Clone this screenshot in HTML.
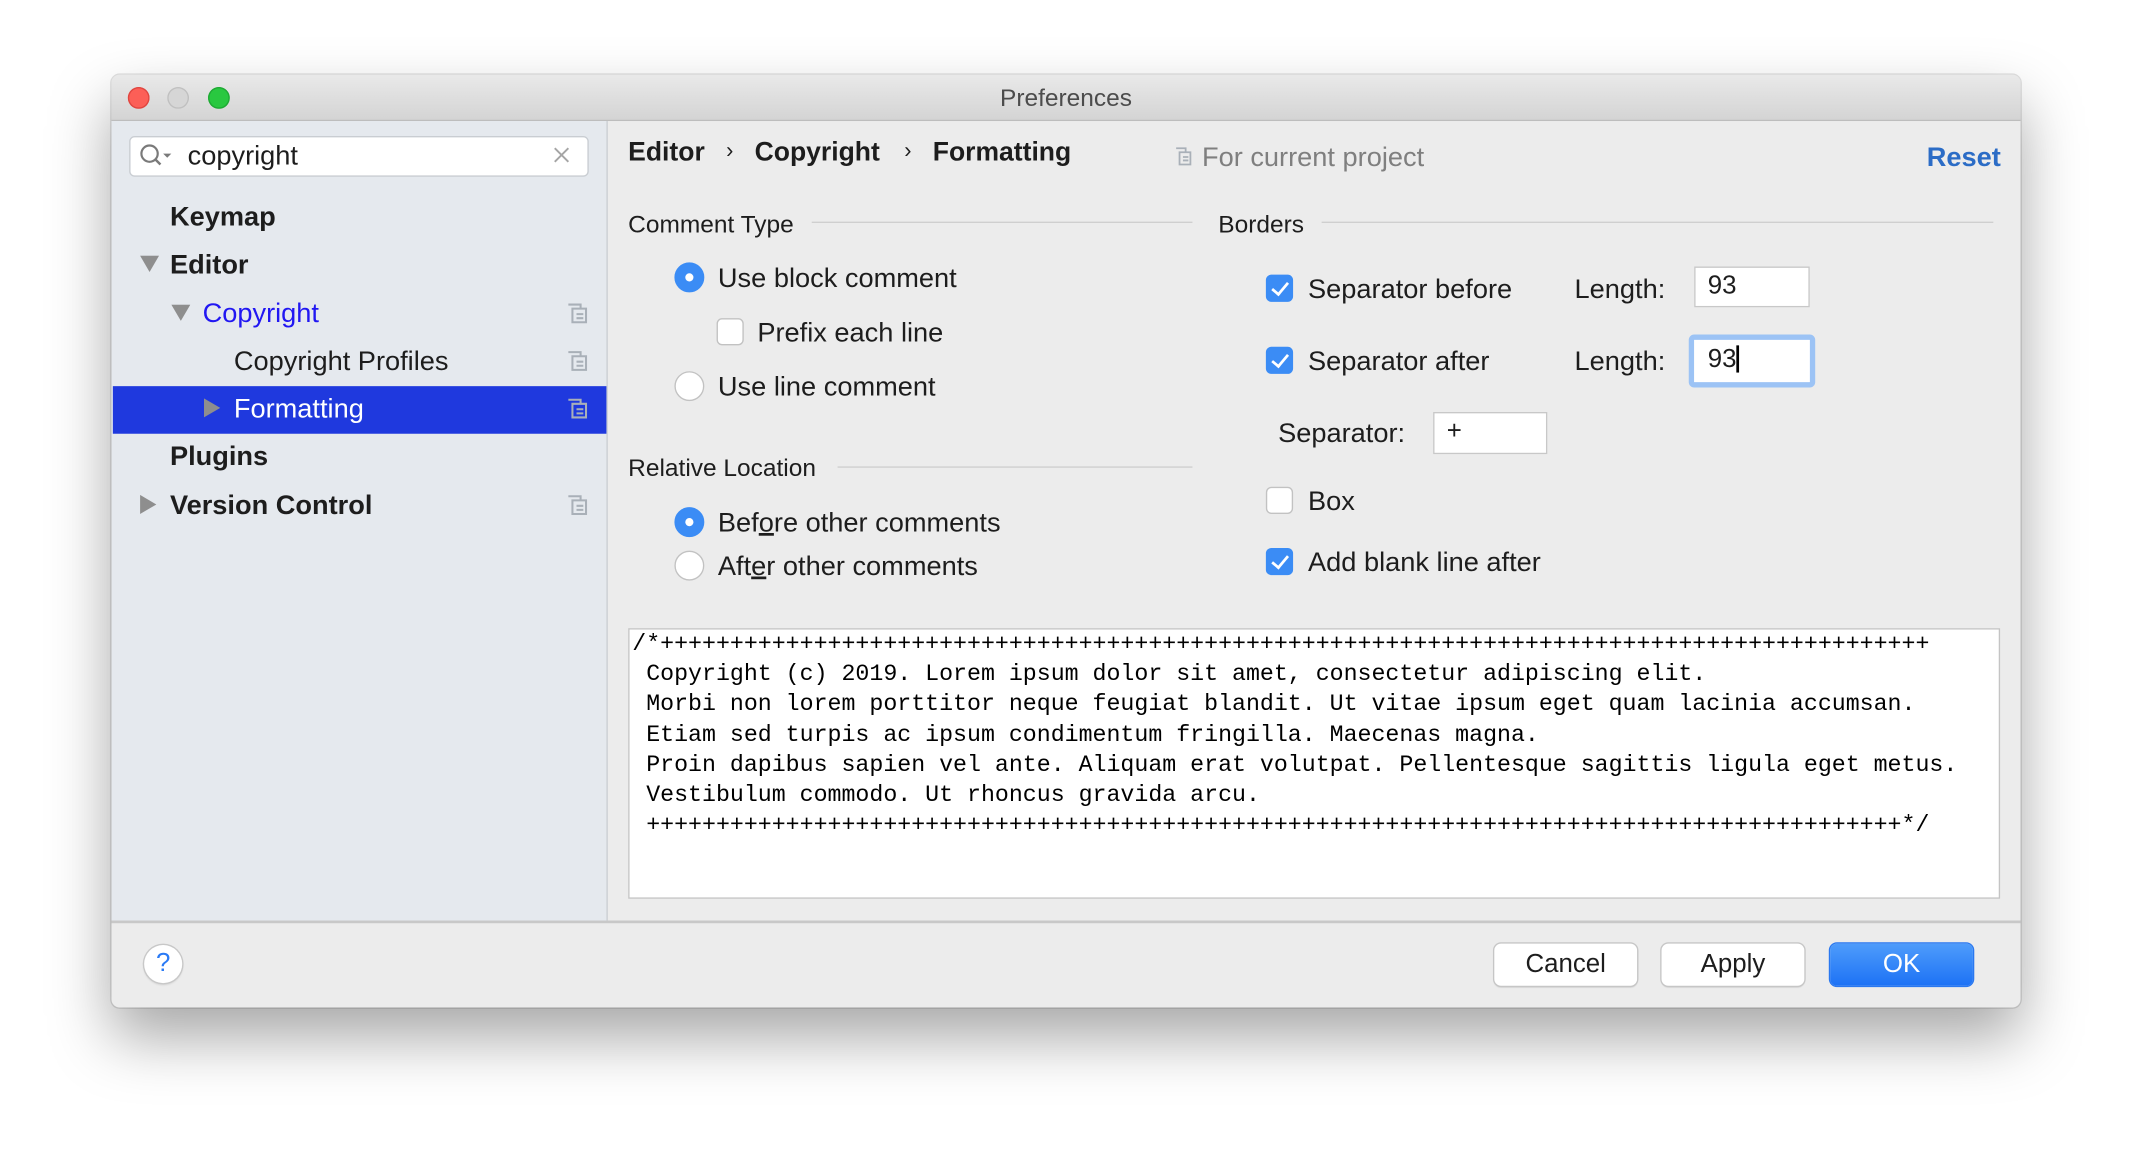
<!DOCTYPE html>
<html><head><meta charset="utf-8"><style>
html,body{margin:0;padding:0;background:#fff;width:2132px;height:1156px;overflow:hidden}
#s{position:absolute;left:0;top:0;width:1568px;height:850px;transform:scale(1.3597);transform-origin:0 0;font-family:"Liberation Sans",sans-serif;color:#1d1d1d}
.a{position:absolute;white-space:nowrap}
.win{position:absolute;left:82px;top:55px;width:1404px;height:686px;border-radius:6px;background:#ececec;box-shadow:0 22px 45px rgba(0,0,0,.35),0 0 0 1px rgba(0,0,0,.12);overflow:hidden}
.t{font-size:20px;line-height:23px}
.b{font-weight:bold}
.radio{position:absolute;width:22px;height:22px;border-radius:50%;background:#fff;border:1px solid #c2c2c2;box-sizing:border-box}
.radio.on{background:#3b8cf5;border-color:#3b8cf5}
.radio.on:after{content:"";position:absolute;left:7px;top:7px;width:6px;height:6px;border-radius:50%;background:#fff}
.cb{position:absolute;width:20px;height:20px;border-radius:4px;background:#fff;border:1px solid #c2c2c2;box-sizing:border-box}
.cb.on{background:#3b8cf5;border-color:#3b8cf5}
.cb.on:after{content:"";position:absolute;left:6px;top:2px;width:5px;height:10px;border:solid #fff;border-width:0 2px 2px 0;transform:rotate(40deg)}
.fld{position:absolute;background:#fff;border:1px solid #c8c8c8;box-sizing:border-box;font-size:19px;line-height:28px;padding-left:9px}
.btn{position:absolute;top:694px;height:31px;width:105px;border-radius:5px;background:#fff;box-shadow:0 0 0 1px #c6c6c6,0 1px 1px rgba(0,0,0,.15);text-align:center;font-size:19px;line-height:31px}
.line{position:absolute;height:1px;background:#cfcfcf}
</style></head><body><div id="s">
<div class="win">
 <div style="position:absolute;left:0;top:0;right:0;height:33px;background:linear-gradient(#e9e9e9,#d4d4d4);border-bottom:1px solid #bdbdbd"></div>
 <div style="position:absolute;left:12px;top:9px;width:16px;height:16px;border-radius:50%;background:#fc5f57;box-shadow:inset 0 0 0 1px #df4640"></div>
 <div style="position:absolute;left:41px;top:9px;width:16px;height:16px;border-radius:50%;background:#d6d6d6;box-shadow:inset 0 0 0 1px #c0c0c0"></div>
 <div style="position:absolute;left:71px;top:9px;width:16px;height:16px;border-radius:50%;background:#29c840;box-shadow:inset 0 0 0 1px #1fa934"></div>
 <div class="a" style="left:0;right:0;top:7px;text-align:center;font-size:18px;color:#4c4c4c">Preferences</div>
 <div style="position:absolute;left:0;top:34px;width:364px;height:588px;background:#e5e9ee;border-right:1px solid #cbcfd3"></div>
 <div style="position:absolute;left:0;top:622px;right:0;height:2px;background:#c8c8c8"></div>
</div>
<!-- sidebar -->
<div style="position:absolute;left:95px;top:100px;width:338px;height:30px;background:#fff;border:1px solid #c9cdd2;border-radius:4px;box-sizing:border-box"></div>
<svg class="a" style="left:102px;top:105px" width="28" height="20"><circle cx="8" cy="8" r="6" fill="none" stroke="#7a7a7a" stroke-width="1.6"/><line x1="12.5" y1="12.5" x2="16" y2="16" stroke="#7a7a7a" stroke-width="1.8"/><path d="M18 8h6l-3 3z" fill="#7a7a7a"/></svg>
<div class="a t" style="left:138px;top:104px">copyright</div>
<svg class="a" style="left:407px;top:108px" width="12" height="12"><path d="M1 1L11 11M11 1L1 11" stroke="#a5a5a5" stroke-width="1.4"/></svg>
<div style="position:absolute;left:83px;top:284px;width:363px;height:35px;background:#1f39de"></div>
<div class="a t b" style="left:125px;top:149px">Keymap</div>
<svg class="a" style="left:103px;top:188px" width="14" height="12"><path d="M0 0h14L7 12z" fill="#8e8e8e"/></svg>
<div class="a t b" style="left:125px;top:184px">Editor</div>
<svg class="a" style="left:126px;top:224px" width="14" height="12"><path d="M0 0h14L7 12z" fill="#8e8e8e"/></svg>
<div class="a t" style="left:149px;top:220px;color:#2117f2">Copyright</div>
<div class="a t" style="left:172px;top:255px">Copyright Profiles</div>
<svg class="a" style="left:150px;top:293px" width="12" height="14"><path d="M0 0v14L12 7z" fill="#8e8e8e"/></svg>
<div class="a t" style="left:172px;top:290px;color:#fff">Formatting</div>
<div class="a t b" style="left:125px;top:325px">Plugins</div>
<svg class="a" style="left:103px;top:364px" width="12" height="14"><path d="M0 0v14L12 7z" fill="#8e8e8e"/></svg>
<div class="a t b" style="left:125px;top:361px">Version Control</div>
<svg class="a" style="left:417px;top:223px" width="15" height="15"><path d="M1 1h9v3M4 4h10v10H4z M7 8h5M7 11h5" fill="none" stroke="#a9b0b8" stroke-width="1.5"/></svg>
<svg class="a" style="left:417px;top:258px" width="15" height="15"><path d="M1 1h9v3M4 4h10v10H4z M7 8h5M7 11h5" fill="none" stroke="#a9b0b8" stroke-width="1.5"/></svg>
<svg class="a" style="left:417px;top:293px" width="15" height="15"><path d="M1 1h9v3M4 4h10v10H4z M7 8h5M7 11h5" fill="none" stroke="#a9b0b8" stroke-width="1.5"/></svg>
<svg class="a" style="left:417px;top:364px" width="15" height="15"><path d="M1 1h9v3M4 4h10v10H4z M7 8h5M7 11h5" fill="none" stroke="#a9b0b8" stroke-width="1.5"/></svg>
<!-- header -->
<div class="a t b" style="left:462px;top:101px;font-size:19.5px">Editor</div>
<div class="a t" style="left:534px;top:100px;font-size:16px">›</div>
<div class="a t b" style="left:555px;top:101px;font-size:19.5px">Copyright</div>
<div class="a t" style="left:665px;top:100px;font-size:16px">›</div>
<div class="a t b" style="left:686px;top:101px;font-size:19.5px">Formatting</div>
<svg class="a" style="left:864px;top:108px" width="13" height="14"><path d="M1 1h7v3M3.5 4h8v9h-8z M6 7.5h4M6 10h4" fill="none" stroke="#a9b0b8" stroke-width="1.3"/></svg>
<div class="a t" style="left:884px;top:105px;color:#7f7f7f">For current project</div>
<div class="a t b" style="left:1417px;top:105px;color:#2b6cc6">Reset</div>
<!-- groups -->
<div class="a t" style="left:462px;top:154px;font-size:18px">Comment Type</div>
<div class="line" style="left:597px;top:163px;width:280px"></div>
<div class="a t" style="left:896px;top:154px;font-size:18px">Borders</div>
<div class="line" style="left:972px;top:163px;width:494px"></div>
<div class="radio on" style="left:496px;top:193px"></div>
<div class="a t" style="left:528px;top:194px">Use block comment</div>
<div class="cb" style="left:527px;top:234px"></div>
<div class="a t" style="left:557px;top:234px">Prefix each line</div>
<div class="radio" style="left:496px;top:273px"></div>
<div class="a t" style="left:528px;top:274px">Use line comment</div>
<div class="a t" style="left:462px;top:333px;font-size:18px">Relative Location</div>
<div class="line" style="left:616px;top:343px;width:261px"></div>
<div class="radio on" style="left:496px;top:373px"></div>
<div class="a t" style="left:528px;top:374px">Bef<u>o</u>re other comments</div>
<div class="radio" style="left:496px;top:405px"></div>
<div class="a t" style="left:528px;top:406px">Aft<u>e</u>r other comments</div>
<div class="cb on" style="left:931px;top:202px"></div>
<div class="a t" style="left:962px;top:202px">Separator before</div>
<div class="a t" style="left:1158px;top:202px">Length:</div>
<div class="fld" style="left:1246px;top:196px;width:85px;height:30px">93</div>
<div class="cb on" style="left:931px;top:255px"></div>
<div class="a t" style="left:962px;top:255px">Separator after</div>
<div class="a t" style="left:1158px;top:255px">Length:</div>
<div style="position:absolute;left:1242px;top:246px;width:93px;height:39px;border-radius:4px;background:#9cc3f5"></div>
<div class="fld" style="left:1246px;top:250px;width:85px;height:31px;border-color:#fff">93<span style="display:inline-block;width:1.5px;height:20px;background:#000;vertical-align:-4px"></span></div>
<div class="a t" style="left:940px;top:308px">Separator:</div>
<div class="fld" style="left:1054px;top:303px;width:84px;height:31px">+</div>
<div class="cb" style="left:931px;top:358px"></div>
<div class="a t" style="left:962px;top:358px">Box</div>
<div class="cb on" style="left:931px;top:403px"></div>
<div class="a t" style="left:962px;top:403px">Add blank line after</div>
<!-- code -->
<div style="position:absolute;left:462px;top:462px;width:1009px;height:199px;background:#fff;border:1px solid #c4c4c4;box-sizing:border-box"></div>
<pre style="position:absolute;left:465px;top:464px;margin:0;white-space:pre;font-family:'Liberation Mono',monospace;font-size:17.1px;line-height:22.2px;color:#000">/*+++++++++++++++++++++++++++++++++++++++++++++++++++++++++++++++++++++++++++++++++++++++++++
 Copyright (c) 2019. Lorem ipsum dolor sit amet, consectetur adipiscing elit.
 Morbi non lorem porttitor neque feugiat blandit. Ut vitae ipsum eget quam lacinia accumsan.
 Etiam sed turpis ac ipsum condimentum fringilla. Maecenas magna.
 Proin dapibus sapien vel ante. Aliquam erat volutpat. Pellentesque sagittis ligula eget metus.
 Vestibulum commodo. Ut rhoncus gravida arcu.
 ++++++++++++++++++++++++++++++++++++++++++++++++++++++++++++++++++++++++++++++++++++++++++*/</pre>
<!-- bottom -->
<div style="position:absolute;left:106px;top:695px;width:28px;height:28px;border-radius:50%;background:#fff;box-shadow:0 0 0 1px #c8c8c8,0 1px 2px rgba(0,0,0,.2);text-align:center;font-size:19px;line-height:28px;color:#2a7af5">?</div>
<div class="btn" style="left:1099px">Cancel</div>
<div class="btn" style="left:1222px">Apply</div>
<div class="btn" style="left:1346px;background:linear-gradient(#4e9cfb,#1d72f5);color:#fff;box-shadow:0 0 0 1px #2a78f0">OK</div>
</div></body></html>
